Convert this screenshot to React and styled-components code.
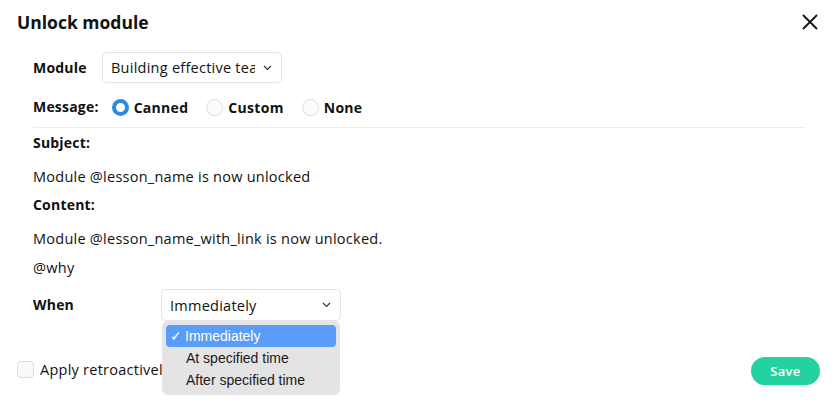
import React from "react";
import styled, { createGlobalStyle } from "styled-components";

const GlobalStyle = createGlobalStyle`
  html, body {
    margin: 0;
    padding: 0;
    background: #fff;
  }
  body {
    font-family: "Open Sans", "Liberation Sans", sans-serif;
    color: #111;
  }
`;

const Modal = styled.div`
  width: 836px;
  height: 402px;
  box-sizing: border-box;
  padding: 10px 16px 0 17px;
  display: flex;
  flex-direction: column;
`;

const Header = styled.div`
  display: flex;
  justify-content: space-between;
  align-items: center;
  height: 24px;
`;

const Title = styled.h2`
  margin: 0;
  font-size: 17.5px;
  font-weight: 700;
`;

const CloseButton = styled.button`
  border: none;
  background: none;
  padding: 0;
  width: 18px;
  height: 18px;
  display: flex;
  margin-right: 1px;
  cursor: pointer;
`;

const Body = styled.div`
  padding-left: 16px;
  display: flex;
  flex-direction: column;
`;

const Row = styled.div`
  display: flex;
  align-items: center;
  height: ${(p) => p.$h || 32}px;
  margin-top: ${(p) => p.$mt || 0}px;
`;

const Label = styled.span`
  font-size: 14px;
  font-weight: 700;
  letter-spacing: 0.2px;
  line-height: 20px;
  width: ${(p) => (p.$w ? `${p.$w}px` : "auto")};
  margin-top: ${(p) => p.$mt || 0}px;
`;

const Text = styled.div`
  font-size: 14.5px;
  letter-spacing: 0.25px;
  line-height: 20px;
  margin-top: ${(p) => p.$mt || 0}px;
`;

const SelectBox = styled.div`
  position: relative;
  box-sizing: border-box;
  width: ${(p) => p.$w}px;
  height: ${(p) => p.$h || 31}px;
  border: 1px solid #e2e2ea;
  border-radius: 5px;
  display: flex;
  align-items: center;
  gap: 8px;
  padding: 0 9px 0 8px;
  font-size: 14.5px;
  letter-spacing: 0.25px;
  white-space: nowrap;
`;

const SelectText = styled.span`
  overflow: hidden;
  flex: 1;
`;

const Radios = styled.div`
  display: flex;
  align-items: center;
  margin-left: 13px;
  gap: 18px;
`;

const RadioItem = styled.label`
  display: flex;
  align-items: center;
  gap: 5px;
  font-size: 14px;
  font-weight: 700;
  letter-spacing: 0.3px;
`;

const RadioDot = styled.span`
  width: 17px;
  height: 17px;
  box-sizing: border-box;
  border-radius: 50%;
  background: ${(p) => (p.$on ? "#fff" : "#fbfbfd")};
  border: ${(p) => (p.$on ? "4px solid #2b8be3" : "1px solid #dcdce6")};
`;

const Divider = styled.hr`
  margin: 8px 0 0 0;
  border: none;
  border-top: 1px solid #ececf3;
  width: 772px;
`;

const Menu = styled.ul`
  position: absolute;
  left: 0;
  top: 31px;
  width: 178px;
  margin: 0;
  padding: 4px;
  box-sizing: border-box;
  list-style: none;
  background: #e4e4e4;
  border-radius: 6px;
  font-family: "Liberation Sans", Arial, sans-serif;
  font-size: 14px;
  letter-spacing: 0;
  z-index: 5;
`;

const MenuItem = styled.li`
  height: 22px;
  display: flex;
  align-items: center;
  padding-left: ${(p) => (p.$active ? 4 : 20)}px;
  border-radius: 4px;
  color: ${(p) => (p.$active ? "#fff" : "#1a1a1a")};
  background: ${(p) => (p.$active ? "#5a9df8" : "transparent")};
  gap: 3px;
`;

const Footer = styled.div`
  display: flex;
  justify-content: space-between;
  align-items: center;
  margin-top: 33px;
`;

const CheckRow = styled.label`
  display: flex;
  align-items: center;
  gap: 6px;
  font-size: 14.5px;
  letter-spacing: 0.25px;
`;

const CheckBox = styled.span`
  width: 17px;
  height: 17px;
  box-sizing: border-box;
  border: 1px solid #dcdce8;
  border-radius: 4px;
  background: #f9f9fc;
`;

const SaveButton = styled.button`
  width: 69px;
  height: 28px;
  margin-top: 3px;
  border: none;
  border-radius: 14px;
  background: #23d2a0;
  color: #fff;
  font-family: inherit;
  font-size: 13px;
  font-weight: 600;
  letter-spacing: 0.3px;
`;

const Chevron = () => (
  <svg width="9" height="6" viewBox="0 0 9 6" fill="none">
    <path d="M1 1l3.5 3.5L8 1" stroke="#333" strokeWidth="1.2" />
  </svg>
);

export default function App() {
  return (
    <>
      <GlobalStyle />
      <Modal>
        <Header>
          <Title>Unlock module</Title>
          <CloseButton aria-label="Close">
            <svg width="18" height="18" viewBox="0 0 18 18">
              <path d="M2 2l14 14M16 2L2 16" stroke="#111" strokeWidth="1.8" />
            </svg>
          </CloseButton>
        </Header>
        <Body>
          <Row $mt={18} $h={31}>
            <Label $w={69}>Module</Label>
            <SelectBox $w={180}>
              <SelectText>Building effective teams</SelectText>
              <Chevron />
            </SelectBox>
          </Row>
          <Row $mt={12} $h={24}>
            <Label>Message:</Label>
            <Radios>
              <RadioItem>
                <RadioDot $on />
                Canned
              </RadioItem>
              <RadioItem>
                <RadioDot />
                Custom
              </RadioItem>
              <RadioItem>
                <RadioDot />
                None
              </RadioItem>
            </Radios>
          </Row>
          <Divider />
          <Label as="div" $mt={5}>
            Subject:
          </Label>
          <Text $mt={14}>Module @lesson_name is now unlocked</Text>
          <Label as="div" $mt={8}>
            Content:
          </Label>
          <Text $mt={14}>Module @lesson_name_with_link is now unlocked.</Text>
          <Text $mt={9}>@why</Text>
          <Row $mt={11} $h={32}>
            <Label $w={128}>When</Label>
            <SelectBox $w={180} $h={32}>
              <SelectText>Immediately</SelectText>
              <Chevron />
              <Menu>
                <MenuItem $active>
                  <span>✓</span>Immediately
                </MenuItem>
                <MenuItem>At specified time</MenuItem>
                <MenuItem>After specified time</MenuItem>
              </Menu>
            </SelectBox>
          </Row>
        </Body>
        <Footer>
          <CheckRow>
            <CheckBox />
            Apply retroactively
          </CheckRow>
          <SaveButton>Save</SaveButton>
        </Footer>
      </Modal>
    </>
  );
}
